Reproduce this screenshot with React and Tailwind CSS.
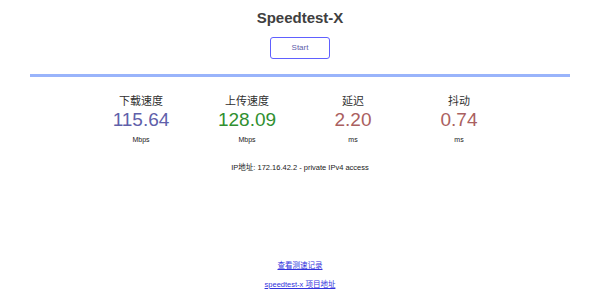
import React from 'react';

const metrics = [
  { label: '下载速度', value: '115.64', unit: 'Mbps', color: 'text-[#6060aa]' },
  { label: '上传速度', value: '128.09', unit: 'Mbps', color: 'text-[#309030]' },
  { label: '延迟', value: '2.20', unit: 'ms', color: 'text-[#aa6060]' },
  { label: '抖动', value: '0.74', unit: 'ms', color: 'text-[#aa6060]' },
];

export default function App() {
  return (
    <div
      className="h-[297px] w-[600px] bg-white text-[#202020] flex flex-col items-center overflow-hidden"
      style={{ fontFamily: '"Liberation Sans", "Noto Sans CJK SC", sans-serif' }}
    >
      <h1 className="mt-[8px] text-[15px] leading-[20px] font-bold text-[#404040]">Speedtest-X</h1>

      <button className="mt-[9px] w-[60px] h-[22px] border border-[#6060ff] rounded-[3px] text-[8px] text-[#6060aa] bg-white">
        Start
      </button>

      <div className="mt-[15px] w-[540px] h-[3px] bg-[#99b4fb]" />

      <div className="mt-[17px] flex">
        {metrics.map((m) => (
          <div key={m.label} className="w-[106px] flex flex-col items-center">
            <div className="text-[11px] leading-[14px] text-[#303030]">{m.label}</div>
            <div className={`mt-[1px] text-[19px] leading-[22px] ${m.color}`}>{m.value}</div>
            <div className="mt-[4px] text-[7px] leading-[10px] text-[#202020]">{m.unit}</div>
          </div>
        ))}
      </div>

      <div className="mt-[17px] text-[7.5px] leading-[12px] text-[#202020]">
        IP地址: 172.16.42.2 - private IPv4 access
      </div>

      <div className="mt-auto mb-[7px] flex flex-col items-center gap-[8px]">
        <a href="#" className="text-[7.5px] leading-[11px] text-[#3333dd] underline">查看测速记录</a>
        <a href="#" className="text-[7.5px] leading-[11px] text-[#3333dd] underline">speedtest-x 项目地址</a>
      </div>
    </div>
  );
}
